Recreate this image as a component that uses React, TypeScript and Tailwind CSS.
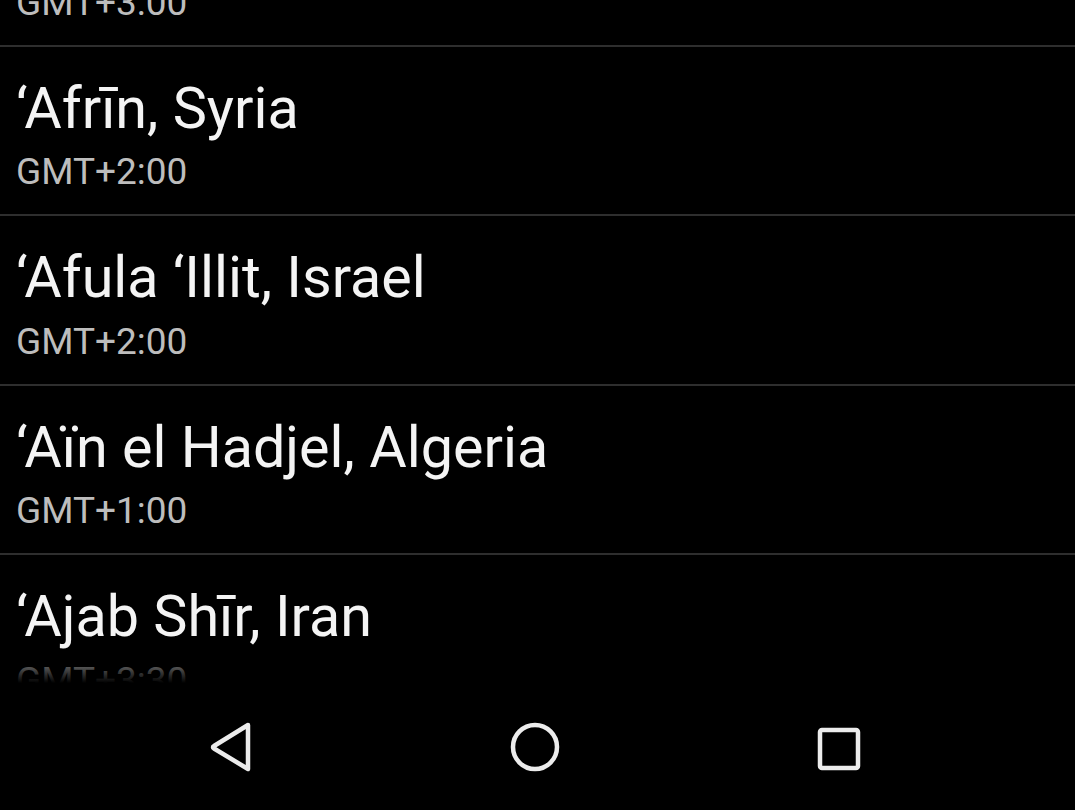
import React from "react";

const ZONES = [
    { city: "‘Afak, Iraq", offset: "GMT+3:00" },
    { city: "‘Afrīn, Syria", offset: "GMT+2:00" },
    { city: "‘Afula ‘Illit, Israel", offset: "GMT+2:00" },
    { city: "‘Aïn el Hadjel, Algeria", offset: "GMT+1:00" },
    { city: "‘Ajab Shīr, Iran", offset: "GMT+3:30" },
];

function NavBar() {
    return (
        <nav className="h-[127px] flex items-center pl-[79px] bg-black">
            <div className="w-[304px] flex justify-center">
                <svg width="48" height="52" viewBox="0 0 48 52">
                    <path d="M41 4 L7 25 Q5 26 7 27.5 L41 48 Z" fill="none" stroke="#ececec" strokeWidth="4.5" strokeLinejoin="round" />
                </svg>
            </div>
            <div className="w-[304px] flex justify-center">
                <svg width="52" height="52" viewBox="0 0 52 52">
                    <circle cx="26" cy="26" r="22" fill="none" stroke="#ececec" strokeWidth="4.5" />
                </svg>
            </div>
            <div className="w-[304px] flex justify-center">
                <svg width="48" height="48" viewBox="0 0 48 48" className="mt-[4px]">
                    <rect x="5" y="5" width="38" height="38" rx="2" fill="none" stroke="#ececec" strokeWidth="4.5" />
                </svg>
            </div>
        </nav>
    );
}

export default function App() {
    return (
        <div className="w-[1075px] h-[810px] bg-black overflow-hidden" style={{ fontFamily: "Roboto, 'Noto Sans', sans-serif" }}>
            <div className="relative h-[683px] overflow-hidden">
                <ul className="mt-[-123px]">
                    {ZONES.map((z) => (
                        <li key={z.city} className="pl-[16px] pt-[33px] pb-[24px] border-b-2 border-[#2e2e2e]">
                            <div className="text-[57.5px] leading-none text-[#f4f4f4] whitespace-nowrap">{z.city}</div>
                            <div className="mt-[16px] text-[37px] leading-none text-[#bdbdbd]">{z.offset}</div>
                        </li>
                    ))}
                </ul>
                <div className="absolute left-0 right-0 bottom-0 h-[36px] bg-gradient-to-b from-transparent to-black" />
            </div>
            <NavBar />
        </div>
    );
}
